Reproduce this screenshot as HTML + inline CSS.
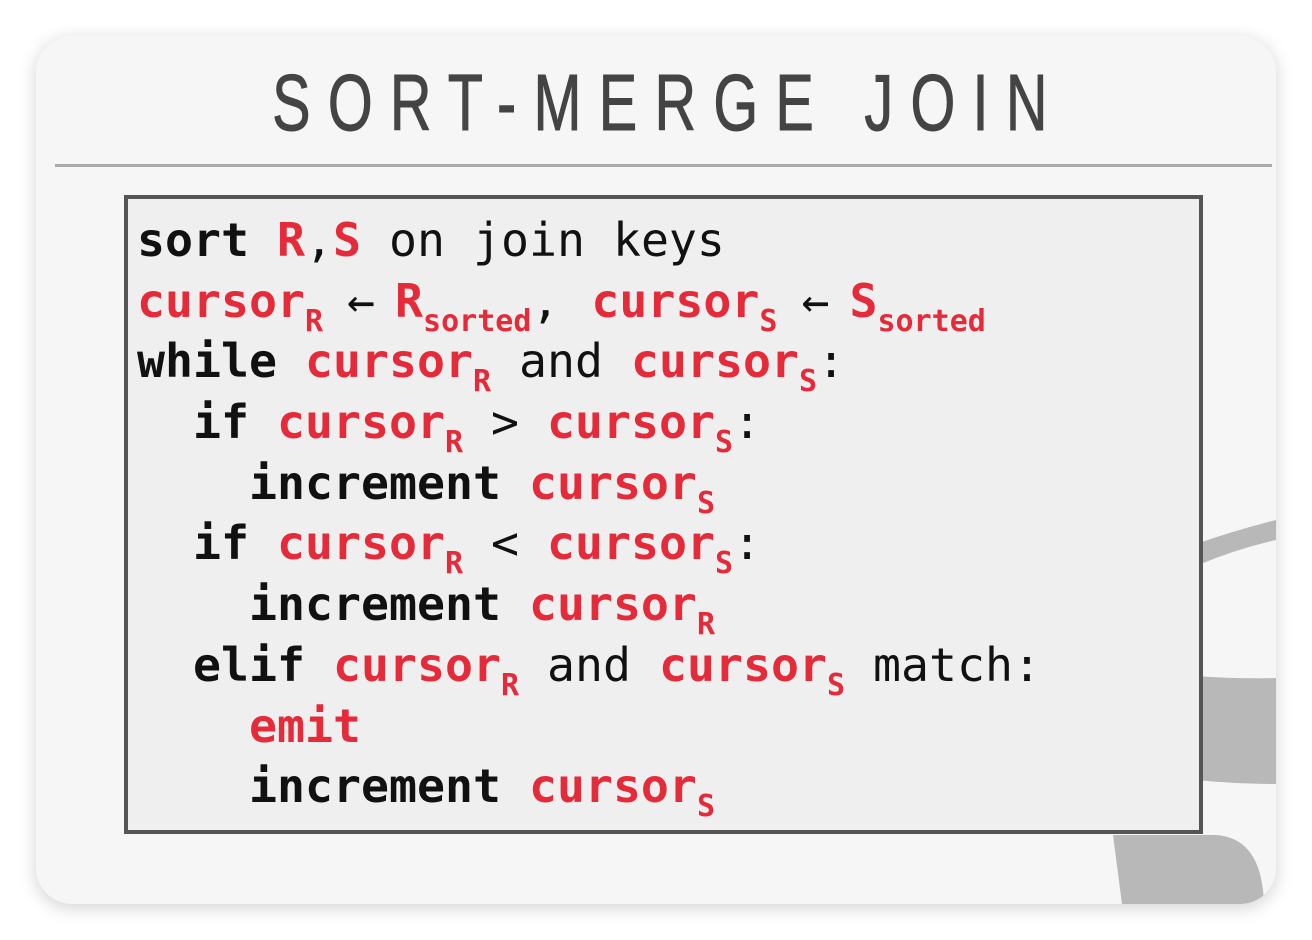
<!DOCTYPE html>
<html><head><meta charset="utf-8"><style>
html,body{margin:0;padding:0;width:1312px;height:940px;background:#fff;overflow:hidden}
.card{position:absolute;left:36px;top:36px;width:1240px;height:868px;border-radius:36px;background:#f6f6f6;box-shadow:0 4px 18px rgba(0,0,0,.18);overflow:hidden}
.title{position:absolute;left:0;top:58px;width:1312px;text-align:center;line-height:90px}
.title span{display:inline-block;font-family:"Liberation Sans",sans-serif;font-size:80px;color:#444;letter-spacing:24px;transform:scaleX(.72);transform-origin:center;margin-left:24px;-webkit-text-stroke:1px #444}
.rule{position:absolute;left:55px;top:164px;width:1217px;height:3px;background:#aaa}
.box{position:absolute;left:124px;top:195px;width:1071px;height:631px;border:4px solid #555;background:#efefef}
.code{position:absolute;left:137px;top:210px;font-family:"DejaVu Sans Mono","Liberation Mono",monospace;font-size:46.5px;line-height:60.7px;color:#111;white-space:pre}
.code div{height:60.7px}
b{font-weight:bold}
.r{color:#e52a3a;font-weight:bold}
.a{letter-spacing:-4px}
.c{letter-spacing:2px}
sub{font-size:30px;vertical-align:-14px;line-height:0}
</style></head><body>
<div class="card">
<svg width="1240" height="868" style="position:absolute;left:0;top:0">
<path d="M1160 508 Q1200 494 1240 484 L1240 504 Q1200 513 1160 530 Z" fill="#b8b8b8"/>
<path d="M1160 640 Q1200 643 1240 642 L1240 748 Q1200 748 1160 744 Z" fill="#b8b8b8"/>
<path d="M1077 799 L1180 799 Q1226 802 1228 868 L1086 868 Z" fill="#b8b8b8"/>
</svg>
</div>
<div class="title"><span>SORT-MERGE JOIN</span></div>
<div class="rule"></div>
<div class="box"></div>
<div class="code"><div><b>sort</b> <span class="r">R</span>,<span class="r">S</span> on join keys</div><div><span class="r">cursor<sub>R</sub></span><span class="a"> ← </span><span class="r">R<sub>sorted</sub></span><span class="c">, </span><span class="r">cursor<sub>S</sub></span><span class="a"> ← </span><span class="r">S<sub>sorted</sub></span></div><div><b>while</b> <span class="r">cursor<sub>R</sub></span> and <span class="r">cursor<sub>S</sub></span>:</div><div>  <b>if</b> <span class="r">cursor<sub>R</sub></span> &gt; <span class="r">cursor<sub>S</sub></span>:</div><div>    <b>increment</b> <span class="r">cursor<sub>S</sub></span></div><div>  <b>if</b> <span class="r">cursor<sub>R</sub></span> &lt; <span class="r">cursor<sub>S</sub></span>:</div><div>    <b>increment</b> <span class="r">cursor<sub>R</sub></span></div><div>  <b>elif</b> <span class="r">cursor<sub>R</sub></span> and <span class="r">cursor<sub>S</sub></span> match:</div><div>    <span class="r">emit</span></div><div>    <b>increment</b> <span class="r">cursor<sub>S</sub></span></div></div>
</body></html>
